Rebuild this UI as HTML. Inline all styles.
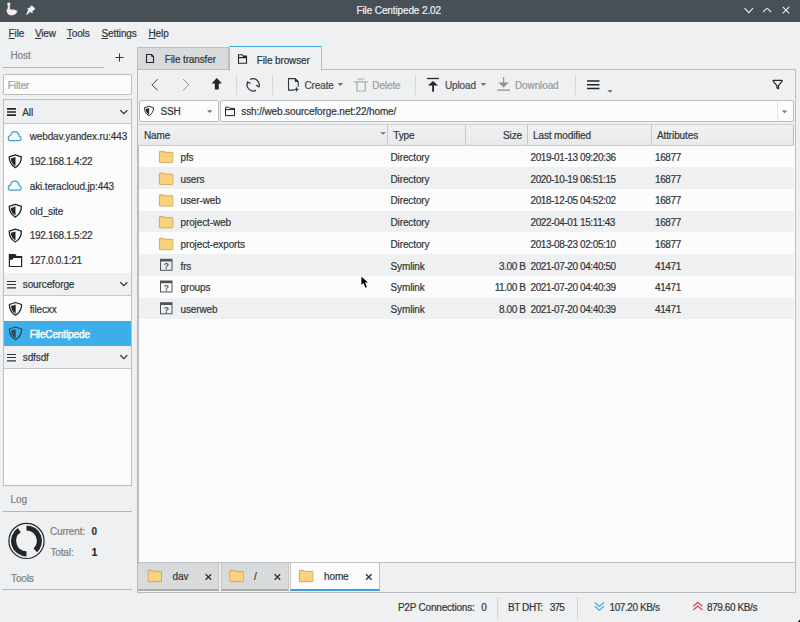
<!DOCTYPE html>
<html><head><meta charset="utf-8">
<style>
*{box-sizing:border-box;margin:0;padding:0}
html,body{width:800px;height:622px;overflow:hidden;background:#eff0f1;font-family:"Liberation Sans",sans-serif;font-size:10px;color:#31363b}
.a{position:absolute}
.t{position:absolute;white-space:nowrap;line-height:12px;height:12px;letter-spacing:-.12px}
.n{letter-spacing:-.4px}
.t{-webkit-text-stroke:.2px currentColor}
svg{position:absolute;overflow:visible}
.g{color:#7f8c8d}
.u{text-decoration:underline;text-underline-offset:1px}
.r{text-align:right}
</style></head><body>
<!-- ============ title bar ============ -->
<div class="a" style="left:0;top:0;width:800px;height:22px;background:#475057"></div>
<div class="t" style="left:356.5px;top:4.8px;color:#eff0f1">File Centipede 2.02</div>
<!-- duck -->
<svg style="left:0;top:0" width="40" height="22" viewBox="0 0 40 22">
 <path d="M8.8 2.2c-1.1 0-1.8.9-1.8 2 0 .6.2 1.1.5 1.5v2.6C6.6 9.2 6.3 10.5 6.6 11.9c.6 2.4 2.6 3.8 5 3.8 2.6 0 4.9-1.5 5.6-3.6l.7-2.6-1.6 1c-.9-1-2.4-1.4-4-1.3l-1.6.1-.6-.5V5.7c.3-.4.5-.9.5-1.5 0-1.1-.8-2-1.8-2z" fill="#f3ecee" stroke="#6e4850" stroke-width=".6"/>
 <path d="M28.2 9.6l2.2 2.2-3.6 3.2-.5-.5z" fill="#eff0f1"/>
 <path d="M31.8 5.3l3.5 3.5-3.8 3.5-3.3-3.3z" fill="#f4f5f6"/>
 <path d="M27.6 8.2l4.9 4.9" stroke="#eff0f1" stroke-width="1.2"/>
</svg>
<!-- window buttons -->
<svg style="left:0;top:0" width="800" height="22" viewBox="0 0 800 22">
 <path d="M744.6 8.2l4.2 4.4 4.2-4.4" fill="none" stroke="#eff0f1" stroke-width="1.1"/>
 <path d="M763 12.2l3.3-3.3c.5-.5 1.1-.5 1.6 0l3.3 3.3" fill="none" stroke="#eff0f1" stroke-width="1.1"/>
 <path d="M782.7 6.8l6.6 6.6M789.3 6.8l-6.6 6.6" fill="none" stroke="#eff0f1" stroke-width="1.1"/>
</svg>

<!-- ============ menu ============ -->
<div class="t" style="left:8.6px;top:27.5px"><span class="u">F</span>ile</div>
<div class="t" style="left:34.9px;top:27.5px"><span class="u">V</span>iew</div>
<div class="t" style="left:66.8px;top:27.5px"><span class="u">T</span>ools</div>
<div class="t" style="left:101.5px;top:27.5px"><span class="u">S</span>ettings</div>
<div class="t" style="left:148.5px;top:27.5px"><span class="u">H</span>elp</div>

<!-- ============ left panel ============ -->
<div class="t g" style="left:10.5px;top:50px;color:#7d8286">Host</div>
<svg style="left:0;top:0" width="140" height="70" viewBox="0 0 140 70">
 <path d="M119.5 53.5v8M115.5 57.5h8" stroke="#31363b" stroke-width="1"/>
</svg>
<div class="a" style="left:2px;top:67px;width:102px;height:1px;background:#b5b7b9"></div>
<div class="a" style="left:3px;top:74px;width:129px;height:21px;background:#fcfcfc;border:1px solid #bcbec0;border-radius:2px"></div>
<div class="t" style="left:7.8px;top:80px;color:#9a9ea1">Filter</div>

<div class="a" style="left:3px;top:99px;width:129px;height:387px;background:#fcfcfc;border:1px solid #bcbec0"></div>
<div class="a" style="left:4px;top:100px;width:127px;height:24px;background:#eff0f1;border-bottom:1px solid #c4c6c8"></div>
<div class="a" style="left:4px;top:273px;width:127px;height:23px;background:#eff0f1;border-bottom:1px solid #c4c6c8"></div>
<div class="a" style="left:4px;top:346px;width:127px;height:23px;background:#eff0f1;border-bottom:1px solid #c4c6c8"></div>
<div class="a" style="left:4px;top:321px;width:127px;height:25px;background:#3daee9"></div>

<div class="t" style="left:22.3px;top:107px">All</div>
<div class="t" style="left:29.7px;top:131px">webdav.yandex.ru:443</div>
<div class="t" style="letter-spacing:-.3px;left:29.7px;top:156px">192.168.1.4:22</div>
<div class="t" style="left:29.7px;top:181px">aki.teracloud.jp:443</div>
<div class="t" style="left:29.7px;top:206px">old_site</div>
<div class="t" style="letter-spacing:-.3px;left:29.7px;top:230px">192.168.1.5:22</div>
<div class="t" style="letter-spacing:-.3px;left:29.7px;top:255px">127.0.0.1:21</div>
<div class="t" style="left:22.8px;top:279px">sourceforge</div>
<div class="t" style="left:29.7px;top:304px">filecxx</div>
<div class="t" style="left:29.7px;top:329px;color:#fcfcfc;-webkit-text-stroke:.45px #fcfcfc">FileCentipede</div>
<div class="t" style="left:22.8px;top:352px">sdfsdf</div>

<svg style="left:0;top:0" width="140" height="380" viewBox="0 0 140 380">
 <defs>
  <path id="cloud" d="M2.3 9.6H11.3C12.6 9.6 13.3 8.7 13.3 7.5 13.3 6.3 12.5 5.3 11.2 5.1 11 2.6 9.4 .6 6.9 .6 4.6 .6 3.2 2.2 2.9 4.5 1.4 4.7 .5 5.9 .5 7.2 .5 8.6 1.2 9.6 2.3 9.6Z" fill="none" stroke="#3b9fd6" stroke-width="1.2" stroke-linejoin="round"/>
  <g id="shield"><path d="M7 .5L.9 2.5C.9 7.6 3.1 11 7 13.3 10.9 11 13.1 7.6 13.1 2.5Z" fill="none" stroke="#232629" stroke-width="1.3" stroke-linejoin="round"/><path d="M7.2 2.7L2.5 4.1C2.7 7.5 4.3 10 7.2 11.8Z" fill="#232629"/></g>
 </defs>
 <path d="M7 108.9h9M7 112h9M7 115.1h9" stroke="#232629" stroke-width="1.7"/>
 <path d="M120.3 110.2l3.5 3.4 3.5-3.4" fill="none" stroke="#31363b" stroke-width="1.2"/>
 <use href="#cloud" x="7.8" y="131"/>
 <use href="#shield" x="8.3" y="154.3"/>
 <use href="#cloud" x="7.8" y="180.6"/>
 <use href="#shield" x="8.3" y="203.8"/>
 <use href="#shield" x="8.3" y="228.7"/>
 <path d="M9.4 254.6h5.6l1.3 1.9h5.3v10h-12.2z" fill="none" stroke="#232629" stroke-width="1.2"/>
 <path d="M9.4 254.6h5.6l1.3 1.9h5.3v1.5h-8.1l-1 1.7h-3.1z" fill="#232629"/>
 <path d="M7 281.5h9M7 284.5h9M7 287.8h9" stroke="#31363b" stroke-width="1.2"/>
 <path d="M120.3 282.3l3.5 3.4 3.5-3.4" fill="none" stroke="#31363b" stroke-width="1.2"/>
 <use href="#shield" x="8.5" y="302"/>
 <g opacity=".75"><use href="#shield" x="8.5" y="326.5"/></g>
 <path d="M7 354.5h9M7 357.5h9M7 360.8h9" stroke="#31363b" stroke-width="1.2"/>
 <path d="M120.3 355.3l3.5 3.4 3.5-3.4" fill="none" stroke="#31363b" stroke-width="1.2"/>
</svg>

<div class="t g" style="left:10.5px;top:494px;color:#7b7f83">Log</div>
<div class="a" style="left:3px;top:511px;width:129px;height:1px;background:#b5b7b9"></div>
<svg style="left:0;top:0" width="140" height="600" viewBox="0 0 140 600">
 <circle cx="26.5" cy="540.9" r="17.6" fill="none" stroke="#232629" stroke-width="1.2"/>
 <path d="M26.5 553.8A12.9 12.9 0 0 1 19.3 530.2" fill="none" stroke="#232629" stroke-width="5.2"/>
 <path d="M26.5 528A12.9 12.9 0 0 1 35.3 550.3" fill="none" stroke="#232629" stroke-width="5.2"/>
</svg>
<div class="t" style="left:49.9px;top:526px;color:#7b7f83">Current:</div>
<div class="t" style="left:91.4px;top:526px;font-weight:bold">0</div>
<div class="t" style="left:50.4px;top:546.5px;color:#7b7f83">Total:</div>
<div class="t" style="left:91.8px;top:546.5px;font-weight:bold;color:#232629">1</div>
<div class="t" style="left:11px;top:572.5px;color:#7b7f83">Tools</div>
<div class="a" style="left:2px;top:589px;width:130px;height:1px;background:#b5b7b9"></div>

<!-- ============ main tab widget ============ -->
<div class="a" style="left:137px;top:47px;width:92px;height:23px;background:#d9dadc;border:1px solid #bcbec0"></div>
<div class="a" style="left:229px;top:46px;width:93px;height:25px;background:#eff0f1;border:1px solid #bcbec0;border-bottom:none;border-top:1px solid #3daee9"></div>
<div class="a" style="left:137px;top:69px;width:659px;height:524px;border:1px solid #b9bbbd;border-top:none"></div>
<div class="a" style="left:322px;top:69px;width:474px;height:1px;background:#bcbec0"></div>
<div class="t" style="left:164.7px;top:54px">File transfer</div>
<div class="t" style="left:256.7px;top:55px">File browser</div>
<svg style="left:0;top:0" width="800" height="130" viewBox="0 0 800 130">
 <path d="M146.5 54.5h5l2 2v6h-7z" fill="none" stroke="#232629" stroke-width="1.1" stroke-linejoin="miter"/>
 <path d="M151.2 54.3l2.5 2.5h-2.5z" fill="#232629"/>
 <path d="M238.5 54.7h3.6l1.2 1.4h3.2v7.2h-8z" fill="none" stroke="#232629" stroke-width="1.1"/>
 <path d="M238.5 57.6h8M243 56.6h3.5" stroke="#232629" stroke-width="1.2"/>
 <!-- toolbar -->
 <path d="M157.6 79.2l-5.6 5.6 5.6 5.6" fill="none" stroke="#31363b" stroke-width="1"/>
 <path d="M183.2 79.2l5.6 5.6-5.6 5.6" fill="none" stroke="#8d9093" stroke-width="1"/>
 <path d="M216.8 78l-5.2 5.6h3.2v6h4v-6h3.2z" fill="#232629"/>
 <path d="M236.5 75v20" stroke="#d6d7d8" stroke-width="1"/>
 <path d="M250.1 79.4A6.3 6.3 0 0 1 258.9 87M256.2 85.1l2.7 1.9 .6-3" fill="none" stroke="#31363b" stroke-width="1.2"/>
 <path d="M247.6 82A6.3 6.3 0 0 0 255.9 90.4M250.6 83.4l-3-1.4-.6 3" fill="none" stroke="#31363b" stroke-width="1.2"/>
 <path d="M272.5 75v20" stroke="#d6d7d8" stroke-width="1"/>
 <path d="M294.5 90.1h-6v-11.5h6.5l3.2 3.2v5" fill="none" stroke="#31363b" stroke-width="1.1"/>
 <path d="M295.2 78.6l2.8 2.9h-2.8z" fill="#232629" stroke="#232629" stroke-width=".8"/>
 <path d="M296.5 87.2v4.2M294.5 89.4h4" fill="none" stroke="#31363b" stroke-width="1.1"/>
 <path d="M337.5 83h5.6l-2.8 2.9z" fill="#6f7376"/>
 <path d="M354 81.8h13.7M357.2 79h7.3M356.9 82v9h8.4v-9" fill="none" stroke="#a8abae" stroke-width="1.2"/>
 <path d="M415.5 75v20" stroke="#d6d7d8" stroke-width="1"/>
 <path d="M427 78.5h12" stroke="#232629" stroke-width="1.3"/>
 <path d="M433 81.1l-5.1 4.4h10.2z" fill="#232629"/>
 <path d="M433.1 85v6.7" stroke="#232629" stroke-width="1.8"/>
 <path d="M480.6 83h5.6l-2.8 2.9z" fill="#6f7376"/>
 <path d="M497.2 90.1h12.8" stroke="#8e9194" stroke-width="1.3"/>
 <path d="M503.6 87.4l-5.2-5h10.4z" fill="#8e9194"/>
 <path d="M503.6 77v6" stroke="#8e9194" stroke-width="1.2"/>
 <path d="M575.5 75v20" stroke="#d6d7d8" stroke-width="1"/>
 <path d="M587 80.9h12.5M587 84.75h12.5M587 88.5h12.5" stroke="#232629" stroke-width="1.5"/>
 <path d="M607.2 90.3h5.6l-2.8 2.3z" fill="#555a5e"/>
 <path d="M773.4 80.4h8.4c.4 0 .5.4.3.7l-3.6 4.6v3l-1.6-.8v-2.2l-3.8-4.6c-.2-.3 0-.7.3-.7z" fill="none" stroke="#232629" stroke-width="1.2" stroke-linejoin="round"/>
</svg>
<div class="t" style="left:304.5px;top:80px;color:#454a4f">Create</div>
<div class="t" style="left:372.3px;top:80px;color:#999c9f">Delete</div>
<div class="t" style="left:444.9px;top:80px;color:#454a4f">Upload</div>
<div class="t" style="left:515px;top:80px;color:#96999c">Download</div>

<!-- SSH combo & path -->
<div class="a" style="left:139px;top:100px;width:80px;height:22px;background:#fcfcfc;border:1px solid #bcbec0;border-radius:2px"></div>
<div class="t" style="left:160.5px;top:106px">SSH</div>
<div class="a" style="left:220px;top:100px;width:574px;height:22px;background:#fcfcfc;border:1px solid #bcbec0;border-radius:2px"></div>
<div class="a" style="left:777px;top:101px;width:1px;height:20px;background:#e3e4e5"></div>
<div class="t" style="left:241.3px;top:106px">ssh://web.sourceforge.net:22/home/</div>
<svg style="left:0;top:0" width="800" height="130" viewBox="0 0 800 130">
 <g transform="translate(143.8,105.9) scale(.74)"><use href="#shield"/></g>
 <path d="M207 110.2h5.4l-2.7 2.8z" fill="#6f7376"/>
 <path d="M781.8 110.5h5.4l-2.7 2.8z" fill="#6f7376"/>
 <path d="M225.5 107.2h3.3l1 1.2h4.7v7.2h-9z" fill="none" stroke="#232629" stroke-width="1"/>
 <path d="M225.5 109.6h9" stroke="#232629" stroke-width="1"/>
</svg>

<!-- table -->
<div class="a" style="left:138px;top:124px;width:657px;height:439px;background:#fcfcfc;border-left:1px solid #bcbec0;border-bottom:1px solid #bcbec0"></div>
<div class="a" style="left:138px;top:124px;width:656px;height:22px;background:linear-gradient(#f0f1f2,#e8e9ea);border-bottom:1px solid #c8cacc;border-top:1px solid #d0d2d3;border-right:1px solid #b8babc"></div>
<div class="a" style="left:387px;top:125px;width:1px;height:20px;background:#c8cacc"></div>
<div class="a" style="left:465px;top:125px;width:1px;height:20px;background:#c8cacc"></div>
<div class="a" style="left:527px;top:125px;width:1px;height:20px;background:#c8cacc"></div>
<div class="a" style="left:651px;top:125px;width:1px;height:20px;background:#c8cacc"></div>
<svg style="left:0;top:0" width="800" height="140" viewBox="0 0 800 140">
 <path d="M380 132.3h6l-3 2.5z" fill="#6f7376"/>
</svg>
<div class="t" style="left:144px;top:130px">Name</div>
<div class="t" style="left:393.3px;top:130px">Type</div>
<div class="t r" style="left:482px;width:40px;top:130px">Size</div>
<div class="t" style="left:533px;top:130px">Last modified</div>
<div class="t" style="left:657px;top:130px">Attributes</div>

<!--ROWS-START-->
<div class="t" style="left:180.5px;top:151.9px">pfs</div>
<div class="t" style="left:390.5px;top:151.9px">Directory</div>
<div class="t n" style="left:530.5px;top:151.9px">2019-01-13 09:20:36</div>
<div class="t n" style="left:655px;top:151.9px">16877</div>
<div class="a" style="left:139px;top:167.05px;width:655px;height:21.75px;background:#eff0f1"></div>
<div class="t" style="left:180.5px;top:173.7px">users</div>
<div class="t" style="left:390.5px;top:173.7px">Directory</div>
<div class="t n" style="left:530.5px;top:173.7px">2020-10-19 06:51:15</div>
<div class="t n" style="left:655px;top:173.7px">16877</div>
<div class="t" style="left:180.5px;top:195.4px">user-web</div>
<div class="t" style="left:390.5px;top:195.4px">Directory</div>
<div class="t n" style="left:530.5px;top:195.4px">2018-12-05 04:52:02</div>
<div class="t n" style="left:655px;top:195.4px">16877</div>
<div class="a" style="left:139px;top:210.55px;width:655px;height:21.75px;background:#eff0f1"></div>
<div class="t" style="left:180.5px;top:217.2px">project-web</div>
<div class="t" style="left:390.5px;top:217.2px">Directory</div>
<div class="t n" style="left:530.5px;top:217.2px">2022-04-01 15:11:43</div>
<div class="t n" style="left:655px;top:217.2px">16877</div>
<div class="t" style="left:180.5px;top:238.9px">project-exports</div>
<div class="t" style="left:390.5px;top:238.9px">Directory</div>
<div class="t n" style="left:530.5px;top:238.9px">2013-08-23 02:05:10</div>
<div class="t n" style="left:655px;top:238.9px">16877</div>
<div class="a" style="left:139px;top:254.05px;width:655px;height:21.75px;background:#eff0f1"></div>
<div class="t" style="left:180.5px;top:260.7px">frs</div>
<div class="t" style="left:390.5px;top:260.7px">Symlink</div>
<div class="t r n" style="left:470px;width:55.6px;top:260.7px">3.00 B</div>
<div class="t n" style="left:530.5px;top:260.7px">2021-07-20 04:40:50</div>
<div class="t n" style="left:655px;top:260.7px">41471</div>
<div class="t" style="left:180.5px;top:282.4px">groups</div>
<div class="t" style="left:390.5px;top:282.4px">Symlink</div>
<div class="t r n" style="left:470px;width:55.6px;top:282.4px">11.00 B</div>
<div class="t n" style="left:530.5px;top:282.4px">2021-07-20 04:40:39</div>
<div class="t n" style="left:655px;top:282.4px">41471</div>
<div class="a" style="left:139px;top:297.55px;width:655px;height:21.75px;background:#eff0f1"></div>
<div class="t" style="left:180.5px;top:304.2px">userweb</div>
<div class="t" style="left:390.5px;top:304.2px">Symlink</div>
<div class="t r n" style="left:470px;width:55.6px;top:304.2px">8.00 B</div>
<div class="t n" style="left:530.5px;top:304.2px">2021-07-20 04:40:39</div>
<div class="t n" style="left:655px;top:304.2px">41471</div>
<svg style="left:0;top:0" width="800" height="622" viewBox="0 0 800 622">
<defs>
 <g id="fold"><path d="M.4 1.4V.9c0-.3.2-.5.5-.5h4.2l1.2 1h7c.3 0 .5.2.5.5v9.3c0 .3-.2.5-.5.5H.9c-.3 0-.5-.2-.5-.5z" fill="#f7c96e" stroke="#c69c55" stroke-width=".8"/><path d="M1 2.4h12.4v8.6H1z" fill="#fbd27c"/></g>
 <g id="sym"><rect x=".5" y=".5" width="11.5" height="11" fill="none" stroke="#4d5257" stroke-width="1"/><rect x=".5" y=".5" width="11.5" height="2.2" fill="#4d5257"/><text x="6.25" y="10.7" font-size="8.6" font-weight="bold" text-anchor="middle" fill="#4d5257" font-family="Liberation Sans">?</text></g>
</defs>
<use href="#fold" x="159" y="150.9"/>
<use href="#fold" x="159" y="172.7"/>
<use href="#fold" x="159" y="194.4"/>
<use href="#fold" x="159" y="216.2"/>
<use href="#fold" x="159" y="237.9"/>
<use href="#sym" x="160" y="258.8"/>
<use href="#sym" x="160" y="280.5"/>
<use href="#sym" x="160" y="302.3"/>
</svg>
<!--ROWS-END-->

<!-- ============ bottom tabs ============ -->
<div class="a" style="left:138px;top:563px;width:81px;height:28px;background:#d9dadc;border-right:1px solid #c4c6c8;border-bottom:2px solid #a9abad"></div>
<div class="a" style="left:221px;top:563px;width:68px;height:28px;background:#d9dadc;border-left:1px solid #c4c6c8;border-right:1px solid #c4c6c8;border-bottom:2px solid #a9abad"></div>
<div class="a" style="left:290px;top:563px;width:90px;height:28px;background:#fcfcfc;border-left:1px solid #c4c6c8;border-right:1px solid #bcbec0;border-bottom:2px solid #3b9fd6"></div>
<div class="t" style="left:172.5px;top:571px">dav</div>
<div class="t" style="left:254px;top:571px">/</div>
<div class="t" style="left:324px;top:571px">home</div>
<svg style="left:0;top:0" width="800" height="622" viewBox="0 0 800 622">
 <use href="#fold" x="147.7" y="570"/>
 <use href="#fold" x="229.5" y="570"/>
 <use href="#fold" x="299" y="570"/>
 <path d="M205.6 574.2l5.6 5.6M211.2 574.2l-5.6 5.6" stroke="#31363b" stroke-width="1.4"/>
 <path d="M274.6 574.2l5.6 5.6M280.2 574.2l-5.6 5.6" stroke="#31363b" stroke-width="1.4"/>
 <path d="M366 574.2l5.6 5.6M371.6 574.2l-5.6 5.6" stroke="#31363b" stroke-width="1.4"/>
 <!-- status separators -->
 <path d="M497.7 597v23M577.5 597v23" stroke="#d0d2d3" stroke-width="1"/>
 <!-- speed icons -->
 <path d="M594.8 602.5l4.6 4 4.6-4M594.8 606.3l4.6 4 4.6-4" fill="none" stroke="#3daee9" stroke-width="1.2"/>
 <path d="M693.2 606.2l4.6-4 4.6 4M693.2 610l4.6-4 4.6 4" fill="none" stroke="#da4453" stroke-width="1.2"/>
 <path d="M800 619.5V622h-2.5z" fill="#1a1a1a"/>
 <!-- cursor -->
 <path d="M361.4 276.8V285l2-1.9 2 4.6 1.5-.6-1.9-4.5h3z" fill="#000"/>
</svg>
<div class="t" style="left:397.9px;top:602px;letter-spacing:-.2px">P2P Connections:</div>
<div class="t" style="left:481.2px;top:601.5px">0</div>
<div class="t n" style="left:507.9px;top:602px">BT DHT:</div>
<div class="t" style="left:549.8px;top:601.5px;letter-spacing:-.8px">375</div>
<div class="t n" style="left:609.5px;top:602px;color:#2e3a4a">107.20 KB/s</div>
<div class="t n" style="left:707px;top:602px">879.60 KB/s</div>
</body></html>
